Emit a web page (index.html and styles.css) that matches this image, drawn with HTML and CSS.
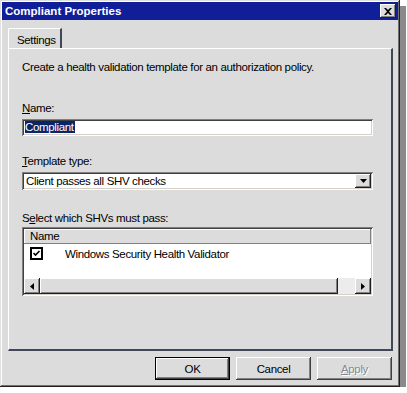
FILE: index.html
```html
<!DOCTYPE html>
<html lang="en">
<head>
    <meta charset="UTF-8">
    <meta name="viewport" content="width=device-width, initial-scale=1.0">
    <title>Compliant Properties</title>
    <link rel="stylesheet" href="styles.css">
</head>
<body>
    <div class="window">
        <div class="titlebar">
            <span class="title">Compliant Properties</span>
            <span class="close-btn">
                <svg width="8" height="7" viewBox="0 0 8 7"><path d="M0 0h2l2 2 2-2h2L5 3.5 8 7H6L4 5 2 7H0l3-3.5z" fill="#000"/></svg>
            </span>
        </div>

        <div class="dialog">
            <div class="tabs">
                <div class="tab">Settings</div>
            </div>

            <div class="panel">
                <p class="intro">Create a health validation template for an authorization policy.</p>

                <div class="label label-name"><u>N</u>ame:</div>
                <div class="textbox"><span class="selection">Compliant</span></div>

                <div class="label label-gap"><u>T</u>emplate type:</div>
                <div class="combo">
                    <span class="combo-text">Client passes all SHV checks</span>
                    <span class="combo-btn">
                        <svg width="7" height="4" viewBox="0 0 7 4"><path d="M0 0h7L3.5 4z" fill="#000"/></svg>
                    </span>
                </div>

                <div class="label label-gap2">S<u>e</u>lect which SHVs must pass:</div>
                <div class="listview">
                    <div class="lv-header"><span class="lv-col">Name</span></div>
                    <div class="lv-body">
                        <div class="lv-row">
                            <span class="check">
                                <svg width="13" height="13" viewBox="0 0 13 13"><rect x="1" y="1" width="11" height="11" fill="#fff" stroke="#000" stroke-width="2"/><path d="M3.5 6l2 2 4-4" fill="none" stroke="#000" stroke-width="1.6"/></svg>
                            </span>
                            <span class="lv-text">Windows Security Health Validator</span>
                        </div>
                    </div>
                    <div class="hscroll">
                        <span class="sb-btn">
                            <svg width="4" height="7" viewBox="0 0 4 7"><path d="M4 0v7L0 3.5z" fill="#000"/></svg>
                        </span>
                        <span class="sb-thumb"></span>
                        <span class="sb-track"></span>
                        <span class="sb-btn">
                            <svg width="4" height="7" viewBox="0 0 4 7"><path d="M0 0v7l4-3.5z" fill="#000"/></svg>
                        </span>
                    </div>
                </div>
            </div>

            <div class="buttons">
                <span class="btn btn-default">OK</span>
                <span class="btn">Cancel</span>
                <span class="btn btn-disabled"><u>A</u>pply</span>
            </div>
        </div>
    </div>
</body>
</html>
```

FILE: styles.css
```css
body {
    margin: 0;
    background: #fff;
    font-family: "Liberation Sans", Arial, sans-serif;
    font-size: 11.5px;
    letter-spacing: -0.35px;
    color: #000;
}
.window {
    width: 400px;
    height: 387px;
    box-sizing: border-box;
    padding: 2px;
    background: #dcdcdc;
    box-shadow: inset -1px -1px #202020, inset 1px 1px #e0e0e0, inset -2px -2px #707070, inset 2px 2px #fff, 6px 6px 0 #8a8a8a;
    display: flex;
    flex-direction: column;
}
.titlebar {
    height: 18px;
    background: #101e98;
    display: flex;
    align-items: center;
    justify-content: space-between;
    padding: 0 2px 0 3px;
}
.title {
    color: #fff;
    font-weight: bold;
    letter-spacing: 0;
}
.close-btn {
    width: 16px;
    height: 14px;
    background: #dcdcdc;
    box-shadow: inset -1px -1px #202020, inset 1px 1px #fff, inset -2px -2px #808080;
    display: flex;
    align-items: center;
    justify-content: center;
}
.dialog {
    flex: 1;
    padding: 8px 5px 0 6px;
    display: flex;
    flex-direction: column;
}
.tabs {
    display: flex;
    height: 20px;
}
.tab {
    width: 54px;
    box-sizing: border-box;
    padding: 5px 0 0 8px;
    border-top: 1px solid #fff;
    border-left: 1px solid #fff;
    border-right: 2px solid #404858;
    border-top-left-radius: 2px;
}
.panel {
    height: 303px;
    box-sizing: border-box;
    border-top: 1px solid #fff;
    border-left: 1px solid #fff;
    border-right: 2px solid #404858;
    border-bottom: 2px solid #404858;
    padding: 12px 18px 0 13px;
    display: flex;
    flex-direction: column;
}
.intro {
    margin: 0;
    line-height: 13px;
}
.label {
    line-height: 13px;
    margin-bottom: 4px;
}
.label-name {
    margin-top: 28px;
}
.label-gap {
    margin-top: 19px;
}
.label-gap2 {
    margin-top: 22px;
    margin-bottom: 2px;
}
.textbox {
    height: 17px;
    box-sizing: border-box;
    background: #fff;
    box-shadow: inset 1px 1px #808080, inset -1px -1px #fff, inset 2px 2px #404040, inset -2px -2px #d4d0c8;
    padding: 2px 3px;
    line-height: 13px;
}
.selection {
    background: #0a246a;
    color: #fff;
    padding-right: 1px;
}
.combo {
    height: 18px;
    box-sizing: border-box;
    background: #fff;
    box-shadow: inset 1px 1px #808080, inset -1px -1px #fff, inset 2px 2px #404040, inset -2px -2px #d4d0c8;
    padding: 2px;
    display: flex;
    align-items: stretch;
}
.combo-text {
    flex: 1;
    padding-left: 2px;
    line-height: 14px;
}
.combo-btn {
    width: 16px;
    background: #dcdcdc;
    box-shadow: inset -1px -1px #202020, inset 1px 1px #fff, inset -2px -2px #808080;
    display: flex;
    align-items: center;
    justify-content: center;
}
.listview {
    height: 69px;
    box-sizing: border-box;
    background: #fff;
    box-shadow: inset 1px 1px #808080, inset -1px -1px #fff, inset 2px 2px #404040, inset -2px -2px #d4d0c8;
    padding: 2px;
    display: flex;
    flex-direction: column;
}
.lv-header {
    height: 15px;
    background: #dcdcdc;
    box-shadow: inset -1px -1px #808080, inset 1px 1px #fff;
    display: flex;
}
.lv-col {
    padding-left: 6px;
    line-height: 14px;
}
.lv-body {
    flex: 1;
}
.lv-row {
    display: flex;
    align-items: center;
    padding: 3px 0 0 6px;
}
.check {
    display: flex;
    width: 13px;
    height: 13px;
}
.lv-text {
    margin-left: 22px;
}
.hscroll {
    height: 16px;
    display: flex;
}
.sb-btn {
    width: 16px;
    background: #dcdcdc;
    box-shadow: inset -1px -1px #202020, inset 1px 1px #fff, inset -2px -2px #808080;
    display: flex;
    align-items: center;
    justify-content: center;
}
.sb-thumb {
    width: 298px;
    background: #dcdcdc;
    box-shadow: inset -1px -1px #202020, inset 1px 1px #fff, inset -2px -2px #808080;
}
.sb-track {
    flex: 1;
    background: #ececec;
}
.buttons {
    display: flex;
    justify-content: flex-end;
    gap: 6px;
    margin-top: 6px;
    padding-right: 1px;
}
.btn {
    width: 75px;
    height: 23px;
    box-sizing: border-box;
    display: flex;
    align-items: center;
    justify-content: center;
    box-shadow: inset -1px -1px #404040, inset 1px 1px #fff, inset -2px -2px #808080;
}
.btn-default {
    box-shadow: inset 0 0 0 1px #000, inset -2px -2px #404040, inset 2px 2px #fff, inset -3px -3px #808080;
}
.btn-disabled {
    color: #8a8a8a;
    text-shadow: 1px 1px #fff;
}
```
